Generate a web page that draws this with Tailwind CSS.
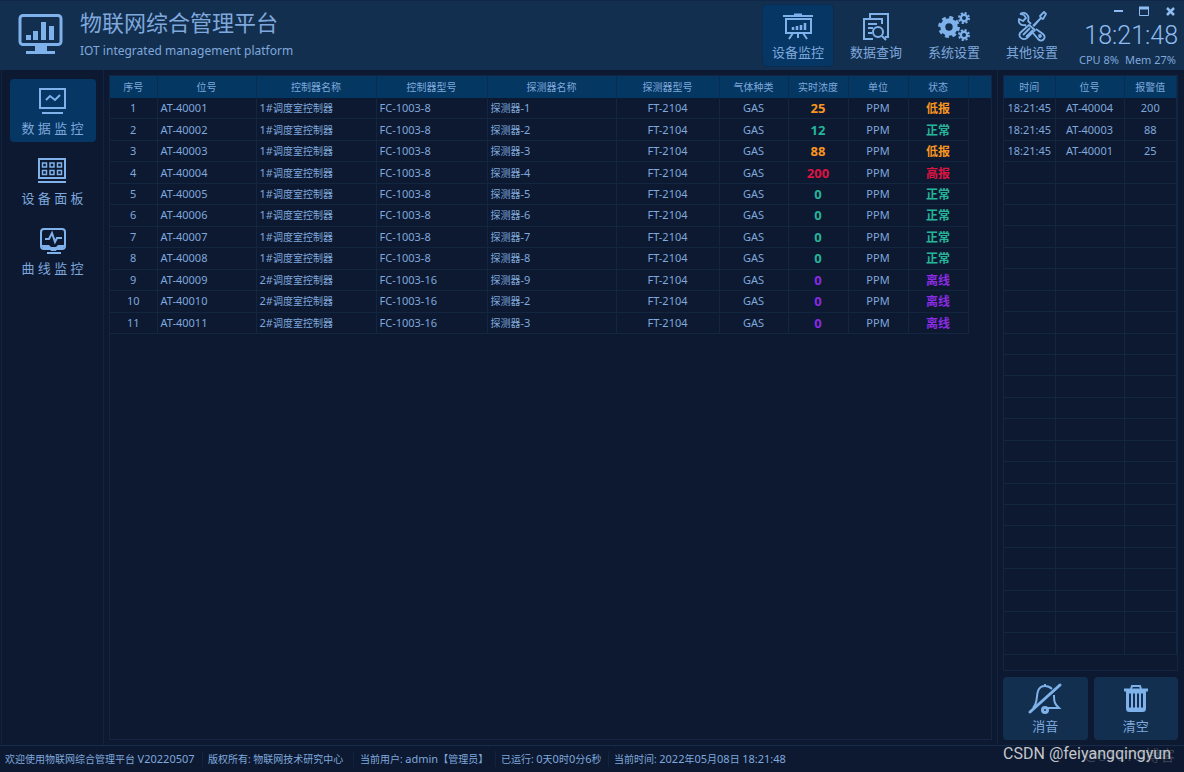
<!DOCTYPE html>
<html lang="zh-CN">
<head>
<meta charset="utf-8">
<title>物联网综合管理平台</title>
<script src="https://cdn.jsdelivr.net/npm/@tailwindcss/browser@4"></script>
</head>
<body class="flex h-screen flex-col overflow-hidden bg-[#0d1931] font-['Noto_Sans','Noto_Sans_CJK_SC',sans-serif] text-[11px] text-[#7fa8dc]">

<header class="flex h-[70px] shrink-0 items-stretch border-t border-[#10274a] bg-[#132f4f] pl-[18px] pr-[6px]">
  <svg class="mt-[11px] h-[44px] w-[46px] shrink-0" viewBox="0 0 46 44" fill="#7fb2ea">
    <rect x="2" y="3.500" width="41" height="29" rx="3" fill="none" stroke="#7fb2ea" stroke-width="3"/>
    <path d="M8 23h5v5H8zM15 19h5v9h-5zM23 10h5v18h-5zM31 14h5v14h-5zM17 34h12v5h8v3H8v-3h9z"/>
  </svg>
  <div class="ml-[16px] flex flex-col pt-[5px]">
    <h1 class="text-[22px] leading-[32px]">物联网综合管理平台</h1>
    <p class="text-[12px] leading-[26px]">IOT integrated management platform</p>
  </div>

  <nav class="ml-auto flex gap-2 pt-[4px]">
    <button class="flex h-[61px] w-[70px] flex-col items-center rounded bg-[#053664] pt-[5px] ring-1 ring-[#0d2a50]">
      <svg class="h-[32px] w-[32px]" viewBox="0 0 32 32" fill="none" stroke="#7fb2ea" stroke-width="2">
        <path d="M1 6h30M4 9v14h25V9zM11 23l-4 6M21 23l4 6M16 23v5"/>
        <path d="M12 5h8" stroke-width="3"/>
        <path d="M11 20v-3M15 20v-4M19 20v-5M23 20v-7" stroke-width="2.500"/>
      </svg>
      <span class="text-[13px] leading-[20px]">设备监控</span>
    </button>
    <button class="flex h-[61px] w-[70px] flex-col items-center pt-[5px]">
      <svg class="h-[32px] w-[32px]" viewBox="0 0 32 32" fill="none" stroke="#7fb2ea" stroke-width="2">
        <path d="M10 8V4h18v23h-3M13 29H4V9h18v5M8 14h9M8 18h5M8 23h4"/>
        <circle cx="18" cy="22" r="5"/><path d="M22 26l4 4"/>
      </svg>
      <span class="text-[13px] leading-[20px]">数据查询</span>
    </button>
    <button class="flex h-[61px] w-[70px] flex-col items-center pt-[5px]">
      <svg class="h-[32px] w-[34px]" viewBox="0 0 34 32" fill="none" stroke="#7fb2ea">
        <circle cx="12" cy="17" r="6.200" stroke-width="5"/>
        <circle cx="12" cy="17" r="9.400" stroke-width="3" stroke-dasharray="3.900 3.483"/>
        <circle cx="27" cy="8" r="3.200" stroke-width="2.400"/>
        <circle cx="27" cy="8" r="5" stroke-width="2" stroke-dasharray="2.100 1.827"/>
        <circle cx="27" cy="25" r="3.200" stroke-width="2.400"/>
        <circle cx="27" cy="25" r="5" stroke-width="2" stroke-dasharray="2.100 1.827"/>
      </svg>
      <span class="text-[13px] leading-[20px]">系统设置</span>
    </button>
    <button class="flex h-[61px] w-[70px] flex-col items-center pt-[5px]">
      <svg class="h-[32px] w-[32px]" viewBox="0 0 32 32" fill="none" stroke="#7fb2ea" stroke-width="1.800" stroke-linejoin="round">
        <path d="M4 4c5-3 10 1 8 7l3 3M20 19l7 5c4 4-1 9-5 5l-5-6M10 16l-1-1c-4 1-7-2-6-6l4 2 3-3-2-3-4-1"/>
        <path d="M17 16l8-8-1-2 4-4 2 2-3 5-2-1-7 8M13 15l6 5-8 8c-4 3-9-1-7-5zM7 25l7-7M10 27l7-7" />
        <circle cx="24" cy="26" r="1"/>
      </svg>
      <span class="text-[13px] leading-[20px]">其他设置</span>
    </button>
  </nav>

  <div class="ml-[11px] flex w-[100px] flex-col items-end">
    <div class="flex h-[20px] w-full items-center justify-end gap-[14px] pr-[2px]">
      <button aria-label="最小化"><svg class="h-[12px] w-[12px]" viewBox="0 0 12 12"><path d="M2 6h9" stroke="#8fbcf0" stroke-width="2"/></svg></button>
      <button aria-label="最大化"><svg class="h-[12px] w-[12px]" viewBox="0 0 12 12" fill="none" stroke="#8fbcf0"><path d="M1.500 2v8.500h9V2"/><path d="M1 3h10" stroke-width="3"/></svg></button>
      <button aria-label="关闭"><svg class="h-[12px] w-[12px]" viewBox="0 0 12 12"><path d="M3 3l7 7M10 3l-7 7" stroke="#8fbcf0" stroke-width="2.500"/></svg></button>
    </div>
    <time class="font-[Roboto,'Liberation_Sans',sans-serif] text-[25px] leading-[30px] font-light text-[#8fbcf0]">18:21:48</time>
    <div class="flex gap-[6px] pr-[2px] text-[11px] leading-[18px] whitespace-nowrap"><span>CPU 8%</span><span>Mem 27%</span></div>
  </div>
</header>

<div class="flex min-h-0 flex-1">
  <aside class="mx-px flex w-[103px] shrink-0 flex-col items-center gap-[7px] border-x border-[#12233f] pt-[9px]">
    <button class="flex h-[63px] w-[86px] flex-col items-center rounded-sm bg-[#053664] pt-[6px]">
      <svg class="h-[32px] w-[32px]" viewBox="0 0 32 32" fill="none" stroke="#7fb2ea" stroke-width="2"><path d="M3 4h25v19H3zM5 28h21M9 15l4-4 5 4 5-5"/></svg>
      <span class="text-[13px] leading-[22px]">数 据 监 控</span>
    </button>
    <button class="flex h-[63px] w-[86px] flex-col items-center pt-[6px]">
      <svg class="h-[32px] w-[32px]" viewBox="0 0 32 32" fill="none" stroke="#7fb2ea" stroke-width="2"><path d="M2 4h26v19H2zM1 27h28"/><path stroke-width="1.500" d="M5.500 8h4v4h-4zM13 8h4v4h-4zM20.500 8h4v4h-4zM5.500 15.500h4v4h-4zM13 15.500h4v4h-4zM20.500 15.500h4v4h-4z"/></svg>
      <span class="text-[13px] leading-[22px]">设 备 面 板</span>
    </button>
    <button class="flex h-[63px] w-[86px] flex-col items-center pt-[6px]">
      <svg class="h-[32px] w-[32px]" viewBox="0 0 32 32" fill="none" stroke="#7fb2ea" stroke-width="2"><rect x="4" y="4" width="24" height="20" rx="3"/><path d="M8 14h4l3-6 3 9 2-4h5M10 28h14"/><path d="M5 20h7l2 2h5l2-2h6v2l-2 2H7l-2-2zM13 24h7l-1 2h-5z" fill="#7fb2ea" stroke="none"/></svg>
      <span class="text-[13px] leading-[22px]">曲 线 监 控</span>
    </button>
  </aside>

  <main class="mt-[5px] mr-[5px] mb-[5px] ml-[4px] min-w-0 flex-1 border border-[#132543]">
    <table class="h-[258px] w-full table-fixed border-collapse">
      <colgroup>
        <col class="w-[47px]"><col class="w-[99px]"><col class="w-[120px]"><col class="w-[111px]"><col class="w-[129px]"><col class="w-[103px]"><col class="w-[69px]"><col class="w-[60px]"><col class="w-[60px]"><col class="w-[60px]"><col>
      </colgroup>
      <thead class="bg-[#043762] text-[10px]">
        <tr id="main-head"></tr>
      </thead>
      <tbody id="main-body"></tbody>
    </table>
  </main>

  <aside class="flex w-[187px] shrink-0 flex-col border-l border-[#12233f] pt-[5px] pr-[6px] pb-[5px] pl-[5px]">
    <div class="min-h-0 flex-1 border border-[#132543] pb-[15px]">
      <table class="h-full w-full table-fixed border-collapse">
        <colgroup><col class="w-[51px]"><col class="w-[69px]"><col></colgroup>
        <thead class="bg-[#043762] text-[10px]"><tr id="alarm-head"></tr></thead>
        <tbody id="alarm-body"></tbody>
      </table>
    </div>
    <div class="mt-[6px] flex gap-[6px]">
      <button class="flex h-[63px] flex-1 flex-col items-center rounded bg-[#132f4f] pt-[4px]">
        <svg class="h-[36px] w-[36px]" viewBox="0 0 36 36" fill="none" stroke="#7fb2ea" stroke-width="2"><path d="M33 4L3 31" stroke-width="3" stroke-linecap="round"/><path d="M6 27c5-5 3-11 5-17 1-3 4-5 7-5s5 1 7 3M18 5V3M27 14c0 8 1 9 5 13H17"/><circle cx="18" cy="29" r="2.500" stroke-width="3"/></svg>
        <span class="text-[13px] leading-[18px]">消音</span>
      </button>
      <button class="flex h-[63px] flex-1 flex-col items-center rounded bg-[#132f4f] pt-[4px]">
        <svg class="h-[36px] w-[36px]" viewBox="0 0 36 36" fill="none" stroke="#7fb2ea" stroke-width="3"><path d="M6 9h24M9.500 10v17.500q0 2 2 2h13q2 0 2-2V10"/><path d="M13 8l1-3h8l1 3" stroke-width="2"/><path d="M14 12v17M18 12v17M22 12v17" stroke-width="2"/><path d="M10 28h16M10 11h16" stroke-width="3"/></svg>
        <span class="text-[13px] leading-[18px]">清空</span>
      </button>
    </div>
  </aside>
</div>

<footer class="flex h-[27px] shrink-0 items-center border-t border-[#172b4b] pl-[5px] whitespace-nowrap text-[10px]">
  <span class="w-[198px] border-r border-[#12233f]">欢迎使用物联网综合管理平台 <span class="text-[11px]">V20220507</span></span>
  <span class="ml-[5px] w-[146px] border-r border-[#12233f]">版权所有: 物联网技术研究中心</span>
  <span class="ml-[6px] w-[136px] border-r border-[#12233f]">当前用户: <span class="text-[11px]">admin</span>【管理员】</span>
  <span class="ml-[5px] w-[108px] border-r border-[#12233f]">已运行: <span class="text-[11px]">0</span>天<span class="text-[11px]">0</span>时<span class="text-[11px]">0</span>分<span class="text-[11px]">6</span>秒</span>
  <span class="ml-[5px]">当前时间: <span class="text-[11px]">2022</span>年<span class="text-[11px]">05</span>月<span class="text-[11px]">08</span>日 <span class="text-[11px]">18:21:48</span></span>
</footer>

<div class="pointer-events-none absolute right-[9px] bottom-[6px] text-[15px] leading-[22px] text-white/20">@51CTO博客</div>
<div class="pointer-events-none absolute right-[13px] bottom-[6px] font-[Roboto,sans-serif] text-[16px] leading-[24px] text-[#c3c6cb]">CSDN @feiyangqingyun</div>

<script>
  const headClass = 'h-[22px] border-r border-[#0a2c52] p-0 text-center font-normal';
  const headCells = names => names.map(n => `<th scope="col" class="${headClass}">${n}</th>`).join('');
  document.getElementById('main-head').innerHTML =
    headCells(['序号', '位号', '控制器名称', '控制器型号', '探测器名称', '探测器型号', '气体种类', '实时浓度', '单位', '状态']) + '<td></td>';
  document.getElementById('alarm-head').innerHTML = headCells(['时间', '位号', '报警值']);

  const tone = { '低报': 'text-[#f7951f]', '正常': 'text-[#25b59b]', '高报': 'text-[#dc1441]', '离线': 'text-[#8b2be2]' };
  // [controller number, model, detector number, value, state]
  const rows = [
    [1, 'FC-1003-8', 1, 25, '低报'], [1, 'FC-1003-8', 2, 12, '正常'], [1, 'FC-1003-8', 3, 88, '低报'],
    [1, 'FC-1003-8', 4, 200, '高报'], [1, 'FC-1003-8', 5, 0, '正常'], [1, 'FC-1003-8', 6, 0, '正常'],
    [1, 'FC-1003-8', 7, 0, '正常'], [1, 'FC-1003-8', 8, 0, '正常'], [2, 'FC-1003-16', 9, 0, '离线'],
    [2, 'FC-1003-16', 2, 0, '离线'], [2, 'FC-1003-16', 3, 0, '离线']
  ];
  const mid = 'border-r border-b border-[#12263f] px-0 text-center leading-[18px]';
  const left = 'border-r border-b border-[#12263f] py-0 pr-0 pl-[3px] text-left leading-[18px]';
  document.getElementById('main-body').innerHTML = rows.map(([c, model, d, v, s], i) => `<tr>
    <td class="${mid}">${i + 1}</td>
    <td class="${left}">AT-${40001 + i}</td>
    <td class="${left}">${c}#<span class="text-[10px]">调度室控制器</span></td>
    <td class="${left}">${model}</td>
    <td class="${left}"><span class="text-[10px]">探测器</span>-${d}</td>
    <td class="${mid}">FT-2104</td>
    <td class="${mid}">GAS</td>
    <td class="${mid} text-[13px] font-bold ${tone[s]}">${v}</td>
    <td class="${mid}">PPM</td>
    <td class="${mid} pt-[2px] text-[12px] font-bold ${tone[s]}">${s}</td>
    <td></td></tr>`).join('');

  const alarms = [['18:21:45', 'AT-40004', 200], ['18:21:45', 'AT-40003', 88], ['18:21:45', 'AT-40001', 25]];
  document.getElementById('alarm-body').innerHTML = Array.from({ length: 26 }, (_, i) =>
    '<tr>' + (alarms[i] || ['&nbsp;', '&nbsp;', '&nbsp;']).map(t => `<td class="${mid}">${t}</td>`).join('') + '</tr>').join('');
</script>
</body>
</html>
